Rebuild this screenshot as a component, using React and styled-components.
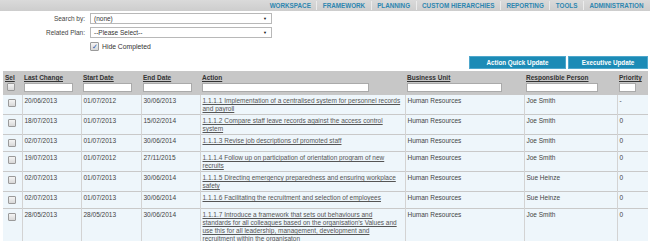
import React from "react";
import styled, { createGlobalStyle } from "styled-components";

const rows = [
  {
    changed: "20/06/2013",
    start: "01/07/2012",
    end: "30/06/2013",
    action: ["1.1.1.1 Implementation of a centralised system for personnel records", "and payroll"],
    unit: "Human Resources",
    person: "Joe Smith",
    priority: "-",
  },
  {
    changed: "18/07/2013",
    start: "01/07/2013",
    end: "15/02/2014",
    action: ["1.1.1.2 Compare staff leave records against the access control", "system"],
    unit: "Human Resources",
    person: "Joe Smith",
    priority: "0",
  },
  {
    changed: "02/07/2013",
    start: "01/07/2013",
    end: "30/06/2014",
    action: ["1.1.1.3 Revise job descriptions of promoted staff "],
    unit: "Human Resources",
    person: "Joe Smith",
    priority: "0",
  },
  {
    changed: "19/07/2013",
    start: "01/07/2012",
    end: "27/11/2015",
    action: ["1.1.1.4 Follow up on participation of orientation program of new", "recruits"],
    unit: "Human Resources",
    person: "Joe Smith",
    priority: "0",
  },
  {
    changed: "02/07/2013",
    start: "01/07/2013",
    end: "30/06/2014",
    action: ["1.1.1.5 Directing emergency preparedness and ensuring workplace", "safety"],
    unit: "Human Resources",
    person: "Sue Heinze",
    priority: "0",
  },
  {
    changed: "02/07/2013",
    start: "01/07/2013",
    end: "30/06/2014",
    action: ["1.1.1.6 Facilitating the recruitment and selection of employees"],
    unit: "Human Resources",
    person: "Sue Heinze",
    priority: "0",
  },
  {
    changed: "28/05/2013",
    start: "28/05/2013",
    end: "30/06/2014",
    action: [
      "1.1.1.7 Introduce a framework that sets out behaviours and",
      "standards for all colleagues based on the organisation\u2019s Values and",
      "use this for all leadership, management, development and",
      "recruitment within the organisaton",
    ],
    unit: "Human Resources",
    person: "Joe Smith",
    priority: "0",
  },
];

const navItems = ["WORKSPACE", "FRAMEWORK", "PLANNING", "CUSTOM HIERARCHIES", "REPORTING", "TOOLS", "ADMINISTRATION"];

const columns = [
  { key: "sel", label: "Sel", width: 19 },
  { key: "changed", label: "Last Change", width: 59, input: 47 },
  { key: "start", label: "Start Date", width: 60, input: 47 },
  { key: "end", label: "End Date", width: 59, input: 47 },
  { key: "action", label: "Action", width: 205, input: 165 },
  { key: "unit", label: "Business Unit", width: 119, input: 93 },
  { key: "person", label: "Responsible Person", width: 93, input: 70 },
  { key: "priority", label: "Priority", width: 31, input: 15 },
];

const GlobalStyle = createGlobalStyle`
  html, body {
    margin: 0;
    padding: 0;
    background: #fff;
    font-family: "Liberation Sans", Arial, sans-serif;
  }
`;

const Page = styled.div`
  width: 650px;
  height: 241px;
  overflow: hidden;
`;

const Nav = styled.nav`
  height: 11px;
  display: flex;
  justify-content: flex-end;
  align-items: center;
  padding-right: 1px;
  background: linear-gradient(#dadada, #cdcdcd);
`;

const NavItem = styled.span`
  font-size: 6.3px;
  font-weight: bold;
  color: #2d86b0;
  padding: 0 5.5px;
  line-height: 9px;
  border-left: ${(p) => (p.$first ? "none" : "1px solid #ececec")};
`;

const Form = styled.div`
  display: grid;
  grid-template-columns: 85px 182px;
  column-gap: 5px;
  row-gap: 3px;
  padding-top: 2px;
  align-items: center;
`;

const Label = styled.label`
  text-align: right;
  font-size: 6.5px;
  color: #444;
`;

const Select = styled.div`
  height: 9px;
  border: 1px solid #b8b8b8;
  display: flex;
  align-items: center;
  justify-content: space-between;
  padding: 0 4px 0 3px;
  font-size: 6.5px;
  color: #333;
  background: #fff;

  &::after {
    content: "\u25BC";
    font-size: 4px;
    color: #111;
  }
`;

const CheckRow = styled.div`
  grid-column: 2;
  display: flex;
  align-items: center;
  gap: 3px;
  margin-top: 1px;
  font-size: 6.8px;
  color: #333;
`;

const Box = styled.span`
  width: 7px;
  height: 7px;
  border: 1px solid #9a9a9a;
  border-radius: 1px;
  background: linear-gradient(#f4f4f4, #d8d8d8);
  display: inline-flex;
  align-items: center;
  justify-content: center;
  color: #2a5aa8;
  font-size: 7px;
  line-height: 1;
  flex: none;
`;

const SelBox = styled(Box)`
  display: block;
  width: 6px;
  height: 6px;
  margin: ${(p) => (p.$head ? "1px 0 0 2px" : "2px auto 3px")};
`;

const Buttons = styled.div`
  display: flex;
  justify-content: flex-end;
  gap: 2px;
  padding: 5px 2px 2px 0;
`;

const Button = styled.button`
  width: ${(p) => p.$w}px;
  height: 13px;
  padding: 0;
  border: 1px solid #4ea7cc;
  background: #1c8bb6;
  color: #fff;
  font-family: inherit;
  font-size: 6.3px;
  font-weight: bold;
`;

const Table = styled.table`
  margin-left: 3px;
  width: 645px;
  table-layout: fixed;
  border-collapse: collapse;
  font-size: 6.5px;
  color: #444;
`;

const Th = styled.th`
  background: #c7c7c7;
  text-align: left;
  vertical-align: top;
  padding: 2px 2px 3px;
  font-weight: bold;
  color: #333;
`;

const HeadLabel = styled.div`
  text-decoration: underline;
  line-height: 9px;
  height: 9px;
`;

const FilterInput = styled.div`
  margin-top: 1px;
  width: ${(p) => p.$w}px;
  height: 7px;
  background: #fff;
  border: 1px solid #aaa;
`;

const Tr = styled.tr`
  background: #eef6fb;
  border-bottom: 1px solid #c9c9c9;
`;

const Td = styled.td`
  vertical-align: top;
  padding: 2px 2px 1px;
  line-height: 8px;
  white-space: nowrap;
  border-left: 1px solid #d3d3d3;

  &:first-child {
    border-left: none;
  }
`;

const ActionLink = styled.a`
  color: #555;
  text-decoration: underline;
`;

export default function App() {
  return (
    <Page>
      <GlobalStyle />
      <Nav>
        {navItems.map((item, i) => (
          <NavItem key={item} $first={i === 0}>
            {item}
          </NavItem>
        ))}
      </Nav>

      <Form>
        <Label>Search by:</Label>
        <Select>(none)</Select>
        <Label>Related Plan:</Label>
        <Select>--Please Select--</Select>
        <CheckRow>
          <Box>{"\u2713"}</Box>
          Hide Completed
        </CheckRow>
      </Form>

      <Buttons>
        <Button $w={97}>Action Quick Update</Button>
        <Button $w={80}>Executive Update</Button>
      </Buttons>

      <Table>
        <colgroup>
          {columns.map((c) => (
            <col key={c.key} style={{ width: c.width }} />
          ))}
        </colgroup>
        <thead>
          <tr>
            {columns.map((c) => (
              <Th key={c.key}>
                <HeadLabel>{c.label}</HeadLabel>
                {c.input ? <FilterInput $w={c.input} /> : <SelBox $head />}
              </Th>
            ))}
          </tr>
        </thead>
        <tbody>
          {rows.map((r, i) => (
            <Tr key={i}>
              <Td>
                <SelBox />
              </Td>
              <Td>{r.changed}</Td>
              <Td>{r.start}</Td>
              <Td>{r.end}</Td>
              <Td>
                <ActionLink href="#">
                  {r.action.map((line, j) => (
                    <React.Fragment key={j}>
                      {j > 0 && <br />}
                      {line}
                    </React.Fragment>
                  ))}
                </ActionLink>
              </Td>
              <Td>{r.unit}</Td>
              <Td>{r.person}</Td>
              <Td>{r.priority}</Td>
            </Tr>
          ))}
        </tbody>
      </Table>
    </Page>
  );
}
